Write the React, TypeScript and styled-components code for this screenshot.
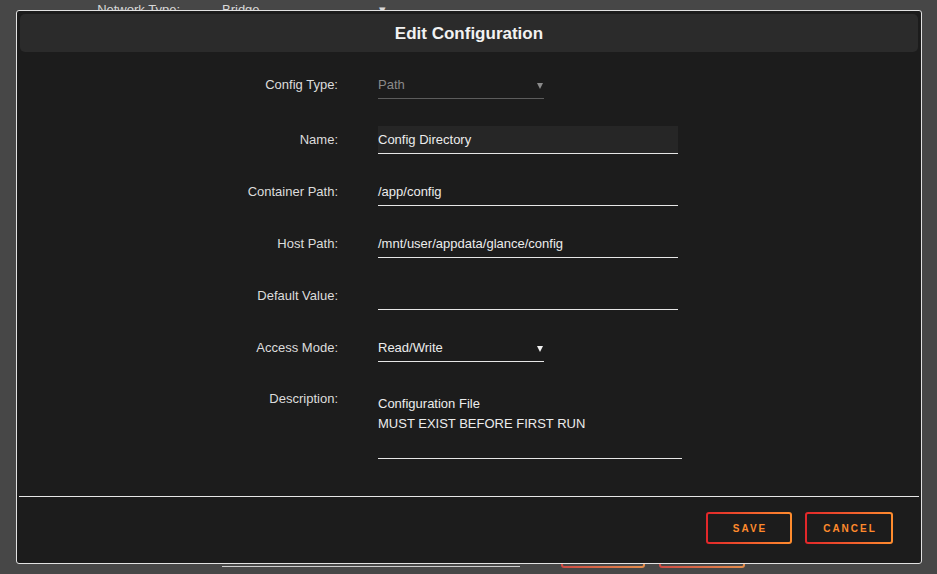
import React from 'react';
import styled, { createGlobalStyle } from 'styled-components';

const GlobalStyle = createGlobalStyle`
    html, body {
        margin: 0;
        padding: 0;
        background: #474747;
        font-family: 'Liberation Sans', Arial, sans-serif;
        color: #e6e6e6;
    }
    * {
        box-sizing: border-box;
    }
`;

/* page behind the dialog */
const Page = styled.div`
    height: 574px;
    overflow: hidden;
    display: flex;
    flex-direction: column;
    justify-content: space-between;
    padding-bottom: 6px;
`;
const PageRow = styled.div`
    display: flex;
    align-items: center;
    gap: 42px;
    font-size: 13px;
    line-height: 16px;
    margin-top: 2px;
`;
const PageLabel = styled.div`
    width: 180px;
    text-align: right;
    color: #d8d8d8;
`;
const PageValue = styled.div`
    width: 164px;
    display: flex;
    justify-content: space-between;
    color: #d8d8d8;
`;
const PageFooter = styled.div`
    display: flex;
    align-items: flex-end;
    padding-left: 222px;
`;
const PageLine = styled.div`
    width: 298px;
    height: 1px;
    background: #cfcfcf;
    margin: 0 41px 1px 0;
`;
const PageButton = styled.div<{ $width: number; $gap?: number }>`
    width: ${(p) => p.$width}px;
    height: 32px;
    border: 2px solid transparent;
    border-radius: 3px;
    margin-left: ${(p) => p.$gap || 0}px;
    background: linear-gradient(#474747, #474747) padding-box,
        linear-gradient(90deg, #cf4b43, #e38d4b) border-box;
`;

/* dialog */
const Modal = styled.div`
    position: fixed;
    top: 10px;
    left: 16px;
    width: 906px;
    height: 554px;
    background: #1c1c1c;
    border: 1px solid #e2e2e2;
    border-radius: 3px;
    display: flex;
    flex-direction: column;
`;
const Header = styled.div`
    margin: 3px;
    height: 38px;
    padding-top: 2px;
    border-radius: 5px;
    background: #2b2b2b;
    display: flex;
    align-items: center;
    justify-content: center;
    font-size: 17px;
    font-weight: 700;
    color: #f2f2f2;
`;
const Body = styled.div`
    flex: 1;
    padding-top: 15px;
    display: flex;
    flex-direction: column;
    gap: 24px;
`;
const Row = styled.div<{ $offset?: number }>`
    display: grid;
    grid-template-columns: 321px 1fr;
    column-gap: 40px;
    margin-top: ${(p) => p.$offset || 0}px;
    margin-bottom: ${(p) => (p.$offset ? 4 - p.$offset : 0)}px;
`;
const Label = styled.div<{ $top?: boolean }>`
    text-align: right;
    font-size: 13px;
    line-height: ${(p) => (p.$top ? '26px' : '28px')};
    color: #dcdcdc;
`;
const Field = styled.div<{ $width: number; $filled?: boolean }>`
    width: ${(p) => p.$width}px;
    height: 28px;
    display: flex;
    align-items: center;
    justify-content: space-between;
    font-size: 13px;
    color: #ececec;
    background: ${(p) => (p.$filled ? '#262626' : 'transparent')};
    border-bottom: 1px solid #e6e6e6;
`;
const SelectField = styled(Field)<{ $muted?: boolean }>`
    color: ${(p) => (p.$muted ? '#8a8a8a' : '#ececec')};
    border-bottom-color: ${(p) => (p.$muted ? '#5c5c5c' : '#e6e6e6')};
    padding-right: 1px;
`;
const Arrow = styled.span<{ $muted?: boolean }>`
    width: 0;
    height: 0;
    border-left: 3px solid transparent;
    border-right: 3px solid transparent;
    border-top: 6px solid ${(p) => (p.$muted ? '#8a8a8a' : '#f0f0f0')};
    margin-top: 2px;
`;
const TextArea = styled.div`
    width: 304px;
    height: 73px;
    padding-top: 8px;
    font-size: 13px;
    line-height: 20px;
    color: #ececec;
    border-bottom: 1px solid #e6e6e6;
`;
const Divider = styled.div`
    height: 1px;
    margin: 0 2px;
    background: #e6e6e6;
`;
const Footer = styled.div`
    height: 66px;
    display: flex;
    justify-content: flex-end;
    align-items: flex-start;
    gap: 13px;
    padding: 15px 28px 0 0;
`;
const Button = styled.button<{ $width: number }>`
    width: ${(p) => p.$width}px;
    height: 32px;
    border: 2px solid transparent;
    border-radius: 3px;
    background: linear-gradient(#1c1c1c, #1c1c1c) padding-box,
        linear-gradient(90deg, #e2262a, #ff8d2e) border-box;
    color: #ff8a2c;
    font-family: 'Liberation Sans', Arial, sans-serif;
    font-size: 10px;
    font-weight: 700;
    letter-spacing: 2px;
    padding: 0 0 0 2px;
    cursor: pointer;
`;

const App = () => {
    return (
        <>
            <GlobalStyle />
            <Page>
                <PageRow>
                    <PageLabel>Network Type:</PageLabel>
                    <PageValue>
                        <span>Bridge</span>
                        <span>▾</span>
                    </PageValue>
                </PageRow>
                <PageFooter>
                    <PageLine />
                    <PageButton $width={84} />
                    <PageButton $width={86} $gap={14} />
                </PageFooter>
            </Page>
            <Modal>
                <Header>Edit Configuration</Header>
                <Body>
                    <Row $offset={1}>
                        <Label>Config Type:</Label>
                        <SelectField $width={166} $muted>
                            Path
                            <Arrow $muted />
                        </SelectField>
                    </Row>
                    <Row>
                        <Label>Name:</Label>
                        <Field $width={300} $filled>
                            Config Directory
                        </Field>
                    </Row>
                    <Row>
                        <Label>Container Path:</Label>
                        <Field $width={300}>/app/config</Field>
                    </Row>
                    <Row>
                        <Label>Host Path:</Label>
                        <Field $width={300}>/mnt/user/appdata/glance/config</Field>
                    </Row>
                    <Row>
                        <Label>Default Value:</Label>
                        <Field $width={300} />
                    </Row>
                    <Row>
                        <Label>Access Mode:</Label>
                        <SelectField $width={166}>
                            Read/Write
                            <Arrow />
                        </SelectField>
                    </Row>
                    <Row>
                        <Label $top>Description:</Label>
                        <TextArea>
                            Configuration File
                            <br />
                            MUST EXIST BEFORE FIRST RUN
                        </TextArea>
                    </Row>
                </Body>
                <Divider />
                <Footer>
                    <Button $width={86}>SAVE</Button>
                    <Button $width={88}>CANCEL</Button>
                </Footer>
            </Modal>
        </>
    );
};

export default App;
